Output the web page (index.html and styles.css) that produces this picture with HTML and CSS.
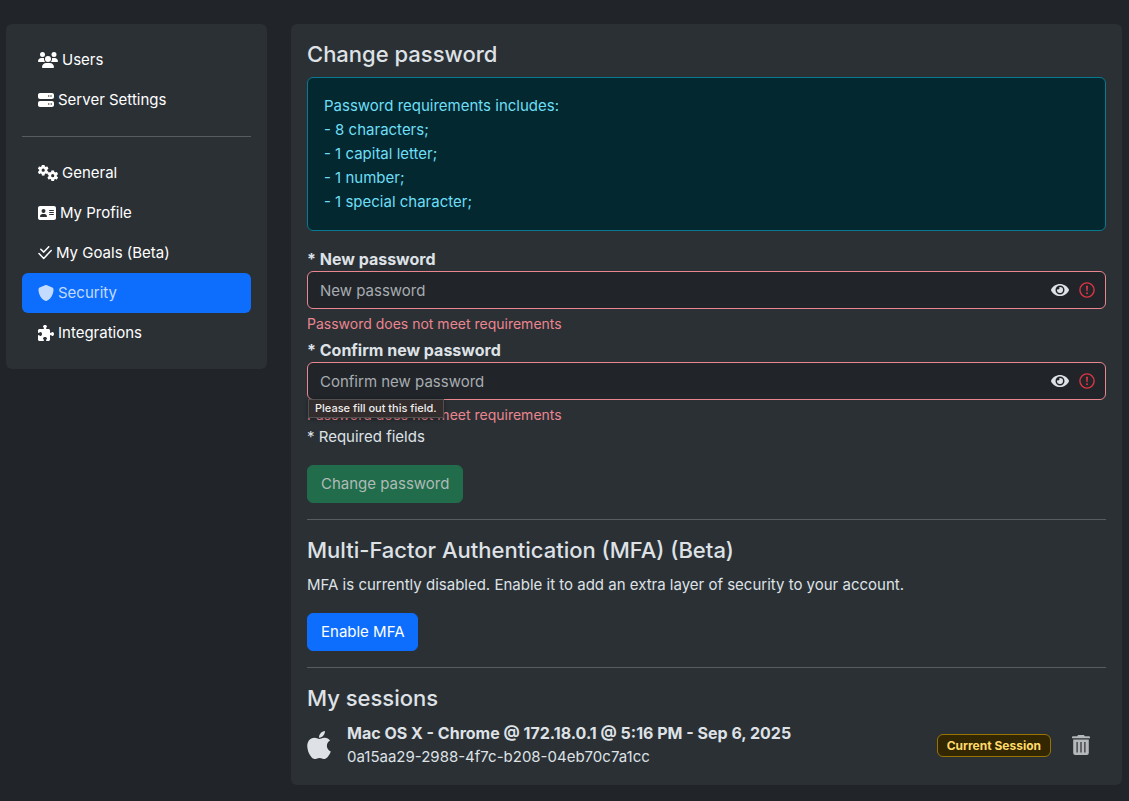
FILE: index.html
```html
<!DOCTYPE html>
<html lang="en">
<head>
<meta charset="utf-8">
<meta name="viewport" content="width=device-width, initial-scale=1">
<title>Security</title>
<link rel="stylesheet" href="styles.css">
</head>
<body>
<svg class="sprite" aria-hidden="true">
  <symbol id="eye" viewBox="0 0 576 512"><path d="M572.52 241.4C518.29 135.59 410.93 64 288 64S57.68 135.64 3.48 241.41a32.35 32.35 0 0 0 0 29.19C57.71 376.41 165.07 448 288 448s230.32-71.64 284.52-177.41a32.35 32.35 0 0 0 0-29.19zM288 400a144 144 0 1 1 144-144 143.93 143.93 0 0 1-144 144zm0-240a95.31 95.31 0 0 0-25.31 3.79 47.85 47.85 0 0 1-66.9 66.9A95.78 95.78 0 1 0 288 160z"/></symbol>
  <symbol id="alert" viewBox="0 0 16 16"><circle cx="8" cy="8" r="7.100" fill="none" stroke="currentColor" stroke-width="1.400"/><path d="M7 3.800h2l-.4 5.500H7.400zM8 10.200a1 1 0 1 1 0 2 1 1 0 1 1 0-2z"/></symbol>
  <symbol id="gear" viewBox="-10 -10 20 20"><circle r="5.200" fill="none" stroke="currentColor" stroke-width="4.600"/><g><rect id="tooth" x="-2.600" y="-10" width="5.200" height="4.500" rx="1"/><use href="#tooth" transform="rotate(60)"/><use href="#tooth" transform="rotate(120)"/><use href="#tooth" transform="rotate(180)"/><use href="#tooth" transform="rotate(240)"/><use href="#tooth" transform="rotate(300)"/></g></symbol>
</svg>
<div class="page">
  <aside class="card">
    <nav class="nav">
      <a class="nav-link" href="#users"><svg class="icon icon-xl" viewBox="0 0 640 512"><path d="M144 0a80 80 0 1 1 0 160A80 80 0 1 1 144 0zM512 0a80 80 0 1 1 0 160A80 80 0 1 1 512 0zM0 298.700C0 239.800 47.800 192 106.700 192l42.700 0c15.900 0 31 3.500 44.600 9.700c-1.300 7.200-1.900 14.700-1.900 22.300c0 38.200 16.800 72.500 43.300 96L21.300 320C9.600 320 0 310.400 0 298.700zM405.300 320c26.600-23.500 42.700-57.800 42.700-96c0-7.600-.7-15-1.900-22.300c13.600-6.300 28.700-9.700 44.600-9.700l42.700 0C592.200 192 640 239.800 640 298.700c0 11.800-9.600 21.300-21.300 21.300zM224 224a96 96 0 1 1 192 0 96 96 0 1 1 -192 0zM128 485.300C128 411.700 187.700 352 261.300 352l117.300 0C452.300 352 512 411.700 512 485.300c0 14.700-11.900 26.700-26.700 26.700l-330.700 0c-14.700 0-26.700-11.900-26.700-26.700z"/></svg>Users</a>
      <a class="nav-link" href="#server"><svg class="icon" viewBox="0 0 512 512"><path d="M64 32C28.700 32 0 60.700 0 96v64c0 35.300 28.700 64 64 64H448c35.300 0 64-28.700 64-64V96c0-35.300-28.700-64-64-64H64zm280 72a24 24 0 1 1 0 48 24 24 0 1 1 0-48zm48 24a24 24 0 1 1 48 0 24 24 0 1 1 -48 0zM64 288c-35.300 0-64 28.700-64 64v64c0 35.300 28.700 64 64 64H448c35.300 0 64-28.700 64-64V352c0-35.300-28.700-64-64-64H64zm280 72a24 24 0 1 1 0 48 24 24 0 1 1 0-48zm56 24a24 24 0 1 1 48 0 24 24 0 1 1 -48 0z"/></svg>Server Settings</a>
      <hr class="rule">
      <a class="nav-link" href="#general"><svg class="icon icon-xl" viewBox="0 0 20 16"><use href="#gear" x="-0.300" y="-0.300" width="11" height="11"/><use href="#gear" x="9.200" y="5.200" width="11" height="11"/></svg>General</a>
      <a class="nav-link" href="#profile"><svg class="icon icon-lg" viewBox="0 0 576 512"><path d="M64 32C28.700 32 0 60.700 0 96V416c0 35.300 28.700 64 64 64H512c35.300 0 64-28.700 64-64V96c0-35.300-28.700-64-64-64H64zm80 256h64c44.200 0 80 35.800 80 80c0 8.800-7.200 16-16 16H80c-8.800 0-16-7.200-16-16c0-44.200 35.800-80 80-80zm-32-96a64 64 0 1 1 128 0 64 64 0 1 1 -128 0zm256-32H496c8.800 0 16 7.200 16 16s-7.200 16-16 16H368c-8.800 0-16-7.200-16-16s7.200-16 16-16zm0 64H496c8.800 0 16 7.200 16 16s-7.200 16-16 16H368c-8.800 0-16-7.200-16-16s7.200-16 16-16zm0 64H496c8.800 0 16 7.200 16 16s-7.200 16-16 16H368c-8.800 0-16-7.200-16-16s7.200-16 16-16z"/></svg>My Profile</a>
      <a class="nav-link" href="#goals"><svg class="icon icon-sm" viewBox="0 0 14 16"><path d="M2.800 4.200l3 2.900L10.800 1.700M1 8.600l4.700 4.800L13.200 5.600" fill="none" stroke="currentColor" stroke-width="1.500" stroke-linecap="round" stroke-linejoin="round"/></svg>My Goals (Beta)</a>
      <a class="nav-link active" href="#security" aria-current="page"><svg class="icon" viewBox="0 0 512 512"><path d="M256 0c4.600 0 9.200 1 13.400 2.900L457.700 82.800c22 9.300 38.400 31 38.300 57.200c-.5 99.200-41.300 280.700-213.600 363.200c-16.700 8-36.100 8-52.800 0C57.300 420.700 16.500 239.200 16 140c-.1-26.200 16.300-47.900 38.300-57.200L242.700 2.900C246.800 1 251.400 0 256 0z"/></svg>Security</a>
      <a class="nav-link" href="#integrations"><svg class="icon" viewBox="0 0 512 512"><path d="M192 104.800c0-9.200-5.800-17.300-13.200-22.800C167.200 73.300 160 61.300 160 48c0-26.500 28.700-48 64-48s64 21.500 64 48c0 13.300-7.200 25.300-18.800 34c-7.400 5.500-13.200 13.600-13.200 22.800c0 12.800 10.400 23.200 23.200 23.200H336c26.500 0 48 21.500 48 48v56.800c0 12.800 10.400 23.200 23.200 23.200c9.200 0 17.300-5.800 22.800-13.200c8.700-11.600 20.700-18.800 34-18.800c26.500 0 48 28.700 48 64s-21.500 64-48 64c-13.300 0-25.300-7.200-34-18.800c-5.500-7.400-13.600-13.200-22.800-13.200c-12.800 0-23.200 10.400-23.200 23.200V464c0 26.500-21.500 48-48 48H279.200c-12.800 0-23.200-10.400-23.200-23.200c0-9.200 5.800-17.300 13.200-22.800c11.600-8.700 18.800-20.700 18.800-34c0-26.500-28.700-48-64-48s-64 21.500-64 48c0 13.300 7.200 25.300 18.800 34c7.400 5.500 13.200 13.600 13.200 22.800c0 12.800-10.400 23.200-23.200 23.200H48c-26.500 0-48-21.500-48-48V343.200C0 330.400 10.400 320 23.200 320c9.200 0 17.300 5.800 22.800 13.200C54.700 344.800 66.700 352 80 352c26.500 0 48-28.700 48-64s-21.500-64-48-64c-13.300 0-25.300 7.200-34 18.800C40.500 250.200 32.400 256 23.200 256C10.400 256 0 245.600 0 232.800V176c0-26.500 21.500-48 48-48H168.800c12.800 0 23.200-10.400 23.200-23.200z"/></svg>Integrations</a>
    </nav>
  </aside>
  <main class="card">
    <section>
      <h1 class="title">Change password</h1>
      <div class="info">Password requirements includes:<br>- 8 characters;<br>- 1 capital letter;<br>- 1 number;<br>- 1 special character;</div>
      <form class="form">
        <div class="field">
          <label class="label" for="new-password">* New password</label>
          <div class="control">
            <input class="input" id="new-password" type="password" placeholder="New password" aria-invalid="true" aria-describedby="new-error">
            <div class="adornments">
              <button class="eye" type="button" aria-label="Show new password"><svg class="icon icon-lg"><use href="#eye"/></svg></button>
              <svg class="icon invalid"><use href="#alert"/></svg>
            </div>
          </div>
          <div class="error" id="new-error">Password does not meet requirements</div>
        </div>
        <div class="field">
          <label class="label" for="confirm-password">* Confirm new password</label>
          <div class="control">
            <input class="input" id="confirm-password" type="password" placeholder="Confirm new password" aria-invalid="true" aria-describedby="confirm-error">
            <div class="adornments">
              <button class="eye" type="button" aria-label="Show confirmed password"><svg class="icon icon-lg"><use href="#eye"/></svg></button>
              <svg class="icon invalid"><use href="#alert"/></svg>
            </div>
            <div class="tooltip" role="tooltip">Please fill out this field.</div>
          </div>
          <div class="error" id="confirm-error">Password does not meet requirements</div>
        </div>
        <p class="text">* Required fields</p>
        <button class="btn btn-success" type="submit" disabled>Change password</button>
      </form>
    </section>
    <hr class="rule">
    <section>
      <h2 class="title">Multi-Factor Authentication (MFA) (Beta)</h2>
      <p class="text">MFA is currently disabled. Enable it to add an extra layer of security to your account.</p>
      <button class="btn btn-primary" type="button">Enable MFA</button>
    </section>
    <hr class="rule">
    <section>
      <h2 class="title">My sessions</h2>
      <div class="session">
        <svg class="apple" viewBox="0 0 384 512"><path d="M318.700 268.700c-.2-36.700 16.400-64.400 50-84.800-18.800-26.900-47.200-41.700-84.700-44.600-35.500-2.800-74.300 20.700-88.500 20.700-15 0-49.400-19.700-76.400-19.700C63.300 141.200 4 184.800 4 273.500q0 39.300 14.400 81.200c12.800 36.700 59 126.700 107.200 125.200 25.200-.6 43-17.900 75.800-17.900 31.800 0 48.300 17.900 76.400 17.900 48.600-.7 90.400-82.500 102.600-119.300-65.200-30.700-61.700-90-61.700-91.900zm-56.600-164.200c27.300-32.400 24.800-61.900 24-72.500-24.100 1.400-52 16.400-67.900 34.900-17.500 19.800-27.800 44.300-25.600 71.900 26.100 2 49.900-11.400 69.500-34.300z"/></svg>
        <div class="session-info">
          <strong class="session-name">Mac OS X - Chrome @ 172.18.0.1 @ 5:16 PM - Sep 6, 2025</strong>
          <div>0a15aa29-2988-4f7c-b208-04eb70c7a1cc</div>
        </div>
        <span class="badge">Current Session</span>
        <button class="trash" type="button" disabled aria-label="Delete session"><svg class="trash-icon" viewBox="0 0 18 20"><path fill-rule="evenodd" d="M6 0h6l.8 1.200H17a1 1 0 0 1 1 1V3.200H0V2.200a1 1 0 0 1 1-1h4.200zM1.200 4.500h15.600V18a2 2 0 0 1-2 2H3.200a2 2 0 0 1-2-2zM4.500 7v10.500h1.200V7zM8.400 7v10.500h1.200V7zM12.300 7v10.500h1.200V7z"/></svg></button>
      </div>
    </section>
  </main>
</div>
</body>
</html>
```
FILE: styles.css
```css
* { box-sizing: border-box; }

body {
  margin: 0;
  background: #212529;
  color: #dee2e6;
  font-family: Inter, "Liberation Sans", sans-serif;
  font-size: 15px;
  line-height: 24px;
}

.sprite { position: absolute; width: 0; height: 0; }

svg { fill: currentColor; flex: none; }

.page {
  display: grid;
  grid-template-columns: repeat(12, minmax(0, 1fr));
  gap: 24px;
  align-items: start;
  padding: 24px 7px 16px 6px;
}

.card {
  grid-column: span 9;
  padding: 16px;
  border-radius: 6px;
  background: #2b3035;
}

aside.card { grid-column: span 3; }

.nav { display: flex; flex-direction: column; }

.nav-link {
  display: flex;
  align-items: center;
  gap: 4px;
  padding: 8px 16px;
  border-radius: 6px;
  color: #fff;
  text-decoration: none;
}

.nav-link.active { background: #0d6efd; color: #c2dbff; }

.icon { width: 16px; height: 16px; }
.icon-xl { width: 20px; }
.icon-lg { width: 18px; }
.icon-sm { width: 14px; }

.rule {
  width: 100%;
  height: 1px;
  margin: 16px 0;
  border: 0;
  background: #585c60;
}

.title {
  margin: 0 0 8px;
  font-size: 22px;
  font-weight: 500;
  line-height: 29px;
}

.info {
  margin-bottom: 16px;
  padding: 16px;
  border: 1px solid #087990;
  border-radius: 6px;
  background: #032830;
  color: #6edff6;
}

.form { margin: 0; }

.field { display: flex; flex-direction: column; }
.field + .field { margin-top: 4px; }

.label { font-size: 16px; font-weight: 700; }

.control { position: relative; }

.input {
  display: block;
  width: 100%;
  height: 38px;
  padding: 6px 64px 6px 12px;
  border: 1px solid #ea868f;
  border-radius: 6px;
  background: #212529;
  color: #dee2e6;
  font: inherit;
}

.input::placeholder { color: #a7acb1; opacity: 1; }

.adornments {
  position: absolute;
  top: 0;
  right: 11px;
  bottom: 0;
  display: flex;
  align-items: center;
  gap: 10px;
}

.eye {
  display: flex;
  padding: 0;
  border: 0;
  background: none;
  color: #dee2e6;
}

.invalid { color: #dc3545; }

.error {
  margin-top: 4px;
  color: #ea868f;
  font-size: 14px;
  line-height: 21px;
}

.tooltip {
  position: absolute;
  top: 37px;
  left: 1px;
  padding: 0 6px;
  border: 1px solid #505050;
  background: #322c2c;
  color: #eee;
  box-shadow: 0 1px 4px #0006;
  font-size: 11px;
  font-weight: 500;
  line-height: 17px;
  white-space: nowrap;
}

.text { margin: 0 0 16px; }

.btn {
  display: block;
  padding: 6px 13px;
  border: 1px solid transparent;
  border-radius: 6px;
  color: #fff;
  font: inherit;
}

.btn-primary { border-color: #0d6efd; background: #0d6efd; }
.btn-success { border-color: #216c4b; background: #216c4b; color: #aebbb6; }

.session { display: flex; align-items: center; }

.apple { width: 24px; height: 32px; margin-right: 16px; }

.session-info { flex: 1; min-width: 0; }
.session-name { display: block; font-size: 16px; font-weight: 700; }

.badge {
  padding: 4px 9px;
  border: 1px solid #997404;
  border-radius: 6px;
  background: #332701;
  color: #ffda6a;
  font-size: 12px;
  font-weight: 700;
  line-height: 13px;
}

.trash {
  display: flex;
  margin-left: 9px;
  padding: 8px 16px 8px 12px;
  border: 0;
  background: none;
  color: #b5b7b9;
}

.trash-icon { width: 18px; height: 20px; }
```
